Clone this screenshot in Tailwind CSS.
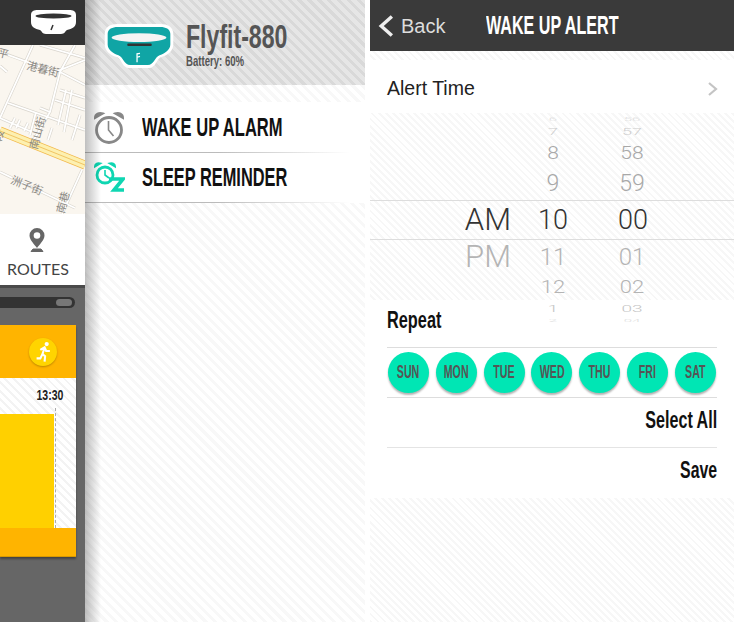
<!DOCTYPE html>
<html lang="en">
<head>
    <meta charset="UTF-8">
    <title>Flyfit Wake Up Alert</title>
    <script src="https://cdn.jsdelivr.net/npm/@tailwindcss/browser@4"></script>
</head>
<body class="w-[734px] h-[622px] overflow-hidden bg-white flex font-['Liberation_Sans',sans-serif]">

    <!-- Left: routes screen, cut off -->
    <div class="w-[85px] h-full shrink-0 flex flex-col bg-[#666666] overflow-hidden">
        <div class="h-[45px] bg-[#333333] flex items-center justify-end pr-[8px]">
            <svg width="47" height="27" viewBox="0 0 47 27">
                <path d="M1 6C1 2 4 1 8 1H39C43 1 46 2 46 6V13C46 18 42 20 37 21C35 22 35 25 31 25H16C12 25 12 22 10 21C5 20 1 18 1 13Z" fill="#fff"/>
                <ellipse cx="23.500" cy="7" rx="18" ry="2.500" fill="#333"/>
                <path d="M23 16L21 21" stroke="#333" stroke-width="1.500"/>
            </svg>
        </div>
        <div class="h-[169px] bg-[#faf6ef] overflow-hidden">
            <svg width="85" height="169" viewBox="0 45 85 169">
                <g fill="none" stroke="#d9d5cd" stroke-width="3">
                    <path id="roads" d="M33 45L0 118M0 52L55 72L85 60M60 72L50 112L32 143M8 103L85 130M0 118L32 132M75 45L60 72M60 72L85 85M60 90L85 98M66 90L58 125M72 90L64 132M36 112L30 135M15 118L10 128M0 172L75 208M82 170L62 214M40 45L85 58M0 66L7 72M55 100L85 110M20 120L16 128M28 123L24 131M50 112L40 108M52 128L48 140M80 115L72 140"/>
                </g>
                <use href="#roads" stroke="#fff" stroke-width="1.800" fill="none"/>
                <path d="M0 131L85 165" stroke="#f2b84a" stroke-width="9"/>
                <path d="M0 131L85 165" stroke="#fdf0b0" stroke-width="7.500"/>
                <path d="M0 131L85 165" stroke="#eeb94e" stroke-width="0.800"/>
                <g font-family="'Noto Sans CJK TC',sans-serif" font-size="11" fill="#8a8883">
                    <text x="-3" y="56" transform="rotate(14 -3 56)">平</text>
                    <text x="26" y="69" transform="rotate(14 26 69)">港暮街</text>
                    <text x="10" y="183" transform="rotate(22 10 183)">洲子街</text>
                    <text x="37" y="150" transform="rotate(-75 37 150)">南山街</text>
                    <text x="64" y="214" transform="rotate(-75 64 214)">南巷</text>
                    <text x="1" y="142" transform="rotate(-75 1 142)">段</text>
                </g>
            </svg>
        </div>
        <div class="h-[71px] bg-white flex flex-col items-center pt-[13px] pr-[9px]">
            <svg width="18" height="26" viewBox="0 0 18 26" class="-ml-[2px]">
                <path d="M9 1a7.500 7.500 0 0 0-7.500 7.500C1.500 13 7 18 9 21C11 18 16.500 13 16.500 8.500A7.500 7.500 0 0 0 9 1Z" fill="#666"/>
                <circle cx="9" cy="8.500" r="3.300" fill="#fff"/>
                <path d="M3 24.500L5 22H13L15 24.500Z" fill="#666" stroke="#666"/>
            </svg>
            <span class="font-['Lato',sans-serif] text-[16px] leading-[20px] mt-[6px] text-[#444444]">ROUTES</span>
        </div>
        <div class="h-[3px] bg-[#4a4a4a]"></div>
        <div class="mt-[9px] h-[11px] w-[75px] rounded-r-full bg-[#333333] flex justify-end items-center pr-[3px]">
            <div class="w-[16px] h-[7px] rounded-full bg-[#777777]"></div>
        </div>
        <div class="mt-[17px] w-[76px] h-[232px] flex flex-col shadow-[0_2px_2px_rgba(0,0,0,0.35)]">
            <div class="h-[53px] bg-[#ffb400] flex items-center justify-end pr-[19px]">
                <div class="w-[28px] h-[28px] rounded-full bg-[#ffd400] shadow-[0_1px_2px_rgba(0,0,0,0.25)] flex items-center justify-center">
                    <svg width="17" height="22" viewBox="0 0 16 20">
                        <circle cx="11" cy="2.500" r="2" fill="#fff"/>
                        <path d="M5 8L9 5.500L10.500 9H14M9 6L7 12L9.500 14L9 19M7 12L5 16H1.500" fill="none" stroke="#fff" stroke-width="2"/>
                    </svg>
                </div>
            </div>
            <div class="h-[150px] bg-[repeating-linear-gradient(45deg,#f3f3f3_0,#f3f3f3_2px,#ffffff_2px,#ffffff_6px)] flex flex-col">
                <div class="h-[30px] flex items-start justify-end pr-[13px] pt-[7px] text-[15px] leading-[20px] font-bold text-[#222222]">
                    <span class="origin-right scale-x-[.7] whitespace-nowrap">13:30</span>
                </div>
                <div class="flex-1 flex">
                    <div class="w-[54px] mt-[6px] bg-[#ffd000]"></div>
                    <div class="w-0 border-l border-dashed border-[#aaaaaa] ml-[1px]"></div>
                </div>
            </div>
            <div class="h-[29px] bg-[#ffb400] border-b border-[#d99a00]"></div>
        </div>
    </div>

    <!-- Middle: device menu -->
    <div class="relative w-[280px] h-full shrink-0 flex flex-col bg-[repeating-linear-gradient(45deg,#f8f8f8_0,#f8f8f8_3px,#ffffff_3px,#ffffff_7px)]">
        <div class="h-[85px] flex items-start pl-[18px] pt-[21px] gap-[11px] bg-[repeating-linear-gradient(45deg,#d9d9d9_0,#d9d9d9_3px,#e6e6e6_3px,#e6e6e6_7px)]">
            <svg width="72" height="47" viewBox="0 0 72 48" class="shrink-0 mt-[2px]">
                <path d="M1 11C1 4 7 1 14 1H58C65 1 71 4 71 11V22C71 29 65 33 58 35C54 37 53 46 46 46H26C19 46 18 37 14 35C7 33 1 29 1 22Z" fill="#fff"/>
                <path d="M4 11C4 6 9 4 14 4H58C63 4 68 6 68 11V22C68 27 63 31 57 33C52 35 51 43 45 43H27C21 43 20 35 15 33C9 31 4 27 4 22Z" fill="#10a5a5"/>
                <ellipse cx="36" cy="15" rx="28" ry="4.500" fill="#f4f4f4"/>
                <rect x="24" y="21" width="25" height="2.500" rx="1" fill="#333"/>
                <path d="M37 31L34 31.500V40M34 35L37 34" fill="none" stroke="#fff" stroke-width="1.300"/>
            </svg>
            <div class="flex flex-col items-start text-[#555555] font-bold">
                <span class="text-[33px] leading-[31px] origin-left scale-x-[.7] whitespace-nowrap">Flyfit-880</span>
                <span class="text-[15px] leading-[16px] mt-[1px] origin-left scale-x-[.64] whitespace-nowrap">Battery: 60%</span>
            </div>
        </div>
        <div class="mt-[17px] bg-white">
            <div class="h-[50px] flex items-center pl-[9px] gap-[18px]">
                <svg width="30" height="35" viewBox="0 0 30 35" class="shrink-0">
                    <circle cx="15" cy="20" r="12.500" fill="none" stroke="#888" stroke-width="2.800"/>
                    <path d="M1 8C1 4 5 2 9 3.500ZM29 8C29 4 25 2 21 3.500Z" fill="#888" stroke="#888" stroke-width="2"/>
                    <path d="M14.500 11V20L19.500 26" fill="none" stroke="#888" stroke-width="1.600"/>
                </svg>
                <span class="text-[26px] font-bold text-[#111111] origin-left scale-x-[.636] whitespace-nowrap">WAKE UP ALARM</span>
            </div>
            <div class="h-px w-[265px] bg-gradient-to-r from-[#bbbbbb] via-[#bbbbbb] to-transparent"></div>
            <div class="h-[49px] flex items-center pl-[9px] gap-[17px]">
                <svg width="31" height="32" viewBox="0 0 31 32" class="shrink-0">
                    <circle cx="11" cy="13" r="8" fill="none" stroke="#0fd6b2" stroke-width="2.800"/>
                    <path d="M1 4.500C1 2 3 1 6 1.500ZM21 4.500C21 2 19 1 16 1.500Z" fill="#0fd6b2" stroke="#0fd6b2" stroke-width="2"/>
                    <path d="M11 8V13L15 16" fill="none" stroke="#0fd6b2" stroke-width="1.600"/>
                    <path d="M15 17H29L20 28H30" fill="none" stroke="#0fd6b2" stroke-width="3.600"/>
                </svg>
                <span class="text-[26px] font-bold text-[#111111] origin-left scale-x-[.63] whitespace-nowrap">SLEEP REMINDER</span>
            </div>
            <div class="h-px w-[265px] bg-gradient-to-r from-[#bbbbbb] via-[#bbbbbb] to-transparent"></div>
        </div>
        <!-- shadow thrown by the panel edge -->
        <div class="absolute left-0 top-0 bottom-0 w-[16px] bg-gradient-to-r from-black/25 to-transparent pointer-events-none"></div>
    </div>

    <div class="w-[5px] h-full shrink-0 bg-white"></div>

    <!-- Right: wake up alert -->
    <div class="w-[364px] h-full shrink-0 flex flex-col bg-[repeating-linear-gradient(45deg,#f7f7f7_0,#f7f7f7_2px,#ffffff_2px,#ffffff_5px)]">
        <div class="h-[51px] shrink-0 bg-[#3a3a3a] flex items-center pl-[8px]">
            <svg width="16" height="24" viewBox="0 0 15 22"><path d="M13 2L3 11L13 20" fill="none" stroke="#eeeeee" stroke-width="3.200"/></svg>
            <span class="text-[20px] text-[#dddddd] ml-[7px] w-[85px]">Back</span>
            <span class="text-[26px] font-bold text-white origin-left scale-x-[.62] whitespace-nowrap">WAKE UP ALERT</span>
        </div>
        <div class="h-[9px] shrink-0"></div>
        <div class="h-[53px] shrink-0 bg-white flex items-center justify-between pl-[17px] pr-[16px] pt-[5px]">
            <span class="text-[19.500px] text-[#222222]">Alert Time</span>
            <svg width="11" height="16" viewBox="0 0 11 16"><path d="M2 2L9 8L2 14" fill="none" stroke="#c4c4c4" stroke-width="2.200"/></svg>
        </div>

        <!-- Time picker wheel -->
        <div class="relative h-[187px] shrink-0 text-center font-['Roboto',sans-serif] font-light">
            <div class="absolute left-0 right-0 top-[87px] h-[40px] border-y border-[#dddddd]"></div>
            <div class="relative flex h-[9px] items-center text-[#dddddd] text-[15px] pt-[3px]">
                <span class="w-[148px]"></span><span class="w-[70px] scale-y-[.3]">6</span><span class="w-[88px] scale-y-[.3]">56</span>
            </div>
            <div class="relative flex h-[18px] items-center text-[#cccccc] text-[18px]">
                <span class="w-[148px]"></span><span class="w-[70px] scale-y-[.55]">7</span><span class="w-[88px] scale-y-[.55]">57</span>
            </div>
            <div class="relative flex h-[26px] items-center text-[#a8a8a8] text-[21px] pt-[2px]">
                <span class="w-[148px]"></span><span class="w-[70px] scale-y-[.85]">8</span><span class="w-[88px] scale-y-[.85]">58</span>
            </div>
            <div class="relative flex h-[34px] items-center text-[#a8a8a8] text-[23px] pt-[3px]">
                <span class="w-[148px]"></span><span class="w-[70px]">9</span><span class="w-[88px]">59</span>
            </div>
            <div class="relative flex h-[40px] items-center text-[#333333] text-[27px] pt-[1px]">
                <span class="w-[141px] text-right text-[31px]">AM</span><span class="w-[7px]"></span><span class="w-[70px]">10</span><span class="w-[90px]">00</span>
            </div>
            <div class="relative flex h-[34px] items-center text-[#b4b4b4] text-[24px]">
                <span class="w-[141px] text-right text-[31px]">PM</span><span class="w-[7px]"></span><span class="w-[70px]">11</span><span class="w-[88px]">01</span>
            </div>
            <div class="relative flex h-[26px] items-center text-[#b4b4b4] text-[22px]">
                <span class="w-[148px]"></span><span class="w-[70px] scale-y-[.8]">12</span><span class="w-[88px] scale-y-[.8]">02</span>
            </div>
            <div class="relative flex h-[18px] items-center text-[#c4c4c4] text-[19px]">
                <span class="w-[148px]"></span><span class="w-[70px] scale-y-[.5]">1</span><span class="w-[88px] scale-y-[.5]">03</span>
            </div>
            <div class="relative flex h-[6px] items-center text-[#dddddd] text-[15px]">
                <span class="w-[148px]"></span><span class="w-[70px] scale-y-[.25]">2</span><span class="w-[88px] scale-y-[.25]">04</span>
            </div>
        </div>

        <div class="h-[198px] shrink-0 bg-white px-[17px] font-bold text-[#111111]">
            <div class="h-[48px] flex items-center text-[24px] border-b border-[#dddddd] pb-[7px]"><span class="origin-left scale-x-[.68] whitespace-nowrap">Repeat</span></div>
            <div class="h-[50px] flex items-center justify-between px-px border-b border-[#dddddd] text-[#555555] text-[19px]">
                <div class="w-[41px] h-[41px] rounded-full bg-[#00e6b4] shadow-[0_2px_2px_rgba(0,0,0,0.3)] flex items-center justify-center"><span class="scale-x-[.56] whitespace-nowrap">SUN</span></div>
                <div class="w-[41px] h-[41px] rounded-full bg-[#00e6b4] shadow-[0_2px_2px_rgba(0,0,0,0.3)] flex items-center justify-center"><span class="scale-x-[.56] whitespace-nowrap">MON</span></div>
                <div class="w-[41px] h-[41px] rounded-full bg-[#00e6b4] shadow-[0_2px_2px_rgba(0,0,0,0.3)] flex items-center justify-center"><span class="scale-x-[.56] whitespace-nowrap">TUE</span></div>
                <div class="w-[41px] h-[41px] rounded-full bg-[#00e6b4] shadow-[0_2px_2px_rgba(0,0,0,0.3)] flex items-center justify-center"><span class="scale-x-[.56] whitespace-nowrap">WED</span></div>
                <div class="w-[41px] h-[41px] rounded-full bg-[#00e6b4] shadow-[0_2px_2px_rgba(0,0,0,0.3)] flex items-center justify-center"><span class="scale-x-[.56] whitespace-nowrap">THU</span></div>
                <div class="w-[41px] h-[41px] rounded-full bg-[#00e6b4] shadow-[0_2px_2px_rgba(0,0,0,0.3)] flex items-center justify-center"><span class="scale-x-[.56] whitespace-nowrap">FRI</span></div>
                <div class="w-[41px] h-[41px] rounded-full bg-[#00e6b4] shadow-[0_2px_2px_rgba(0,0,0,0.3)] flex items-center justify-center"><span class="scale-x-[.56] whitespace-nowrap">SAT</span></div>
            </div>
            <div class="h-[50px] flex items-center justify-end text-[24px] border-b border-[#e4e4e4] pb-[5px]"><span class="origin-right scale-x-[.67] whitespace-nowrap">Select All</span></div>
            <div class="h-[50px] flex items-center justify-end text-[24px] pb-[6px]"><span class="origin-right scale-x-[.66] whitespace-nowrap">Save</span></div>
        </div>
    </div>
</body>
</html>
